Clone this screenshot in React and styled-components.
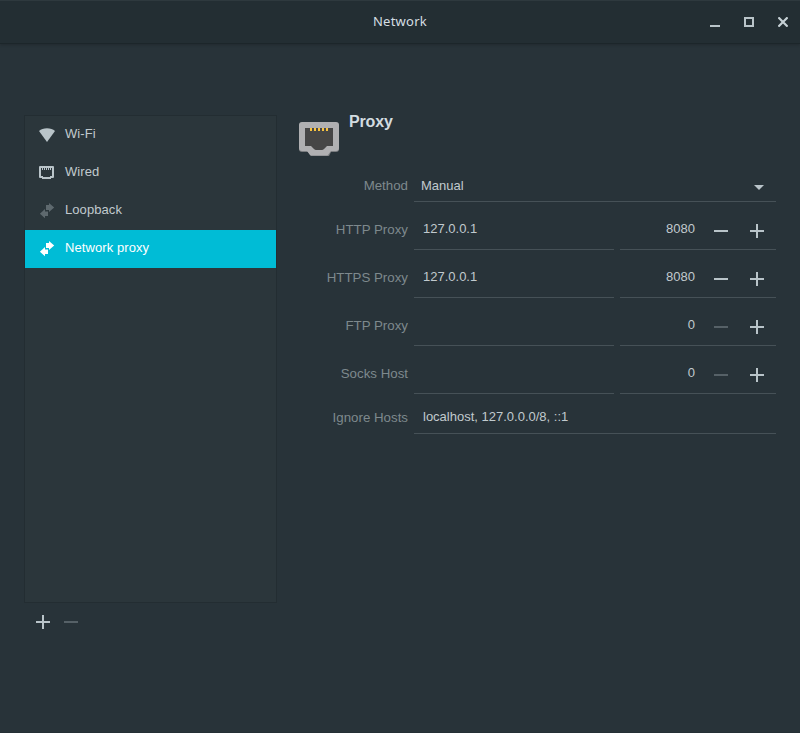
import React from 'react';
import styled, { createGlobalStyle } from 'styled-components';

const Global = createGlobalStyle`
  * { box-sizing: border-box; }
  body { margin: 0; background: #263238; }
`;

const Window = styled.main`
  width: 800px;
  height: 733px;
  display: flex;
  flex-direction: column;
  overflow: hidden;
  background: #283339;
  border-bottom: 1px solid #242f35;
  color: #c1cace;
  font: 13px/16px "Liberation Sans", Arial, sans-serif;
`;

const TitleBar = styled.header`
  flex: none;
  height: 44px;
  display: grid;
  grid-template-columns: 1fr auto 1fr;
  align-items: center;
  background: #232e33;
  border-top: 1px solid #2e393e;
  border-bottom: 1px solid #1c262a;
  box-shadow: 0 1px 3px rgba(0, 0, 0, 0.2);
`;

const Title = styled.h1`
  grid-column: 2;
  margin: 0;
  font: 400 13px/18px "Noto Sans", sans-serif;
  letter-spacing: 0.25px;
  padding-bottom: 2px;
  color: #d6dfe3;
`;

const WindowControls = styled.div`
  display: flex;
  align-items: center;
  justify-content: flex-end;
  gap: 24px;
  padding-right: 12px;
`;

const Icon = styled.svg`
  display: block;
  flex: none;
  color: ${(p) => p.$color || '#b9c4c9'};
`;

const Content = styled.div`
  flex: 1;
  display: flex;
  gap: 22px;
  padding: 71px 24px 0;
`;

const Sidebar = styled.aside`
  width: 253px;
  flex: none;
`;

const DeviceList = styled.ul`
  height: 488px;
  margin: 0;
  padding: 0;
  list-style: none;
  background: #2b363b;
  border: 1px solid #232d32;
`;

const Device = styled.li`
  height: 38px;
  display: flex;
  align-items: center;
  gap: 10px;
  padding-left: 14px;
  background: ${(p) => (p.$selected ? '#00bcd6' : 'transparent')};
  color: ${(p) => (p.$selected ? '#ffffff' : 'inherit')};
`;

const DeviceName = styled.span`
  padding-bottom: 3px;
  letter-spacing: 0.08px;
`;

const ListActions = styled.div`
  display: flex;
  gap: 14px;
  padding: 12px;
`;

const Panel = styled.section`
  width: 477px;
`;

const PanelHeader = styled.div`
  display: flex;
  gap: 10px;
  height: 55px;
`;

const JackIcon = styled(Icon)`
  margin-top: 7px;
`;

const PanelTitle = styled.h2`
  margin: 0;
  padding-top: 1px;
  height: 16px;
  font: bold 16px/12px "Liberation Sans", Arial, sans-serif;
  letter-spacing: -0.15px;
  color: #d3dce0;
`;

const Row = styled.div`
  display: grid;
  grid-template-columns: 109px ${(p) => (p.$wide ? '362px' : '200px 156px')};
  column-gap: 6px;
  height: ${(p) => p.$height}px;
`;

const Label = styled.label`
  padding-top: ${(p) => p.$top}px;
  text-align: right;
  font-size: 13.300px;
  color: #7e898d;
`;

const Field = styled.div`
  display: flex;
  padding: ${(p) => p.$top}px 12px 0 ${(p) => p.$left ?? 9}px;
  border-bottom: 1px solid #465157;
`;

const PortField = styled(Field)`
  justify-content: flex-end;
  padding-left: 0;
`;

const Steps = styled.span`
  display: flex;
  gap: 22px;
  padding: 3px 0 0 19px;
`;

const MethodValue = styled.span`
  flex: 1;
`;

const Arrow = styled(Icon)`
  margin-top: 7px;
`;

function Plus() {
  return (
    <Icon width="14" height="14" shapeRendering="crispEdges">
      <path d="M6 0h2v6h6v2H8v6H6V8H0V6h6z" fill="currentColor" />
    </Icon>
  );
}

function Minus({ disabled }) {
  return (
    <Icon width="14" height="14" $color={disabled ? '#566167' : undefined}>
      <path d="M0 6h14v2H0z" fill="currentColor" />
    </Icon>
  );
}

function WifiIcon() {
  return (
    <Icon width="16" height="16">
      <path d="M0 4C2 2 4.700 1.200 8 1.200S14 2 16 4L8 15z" fill="currentColor" />
    </Icon>
  );
}

function WiredIcon() {
  return (
    <Icon width="16" height="16">
      <path
        fillRule="evenodd"
        d="M1 1h13q1 0 1 1v10q0 1-1 1h-2v1H3v-1H1q-1 0-1-1V2q0-1 1-1zm1 2v8h2v1h7v-1h2V3h-1v2h-1V3h-1v2H9V3H8v2H7V3H6v2H5V3H4v2H3V3z"
        fill="currentColor"
      />
    </Icon>
  );
}

function TransferIcon({ color }) {
  return (
    <Icon width="16" height="16" $color={color}>
      <path d="M10 0 15.200 4.500 10 9V7H7V2h3zM6 6v2.500h3v4.500H6v2.300L.9 10.700z" fill="currentColor" />
    </Icon>
  );
}

const devices = [
  { name: 'Wi-Fi', icon: <WifiIcon /> },
  { name: 'Wired', icon: <WiredIcon /> },
  { name: 'Loopback', icon: <TransferIcon color="#5e696e" /> },
  { name: 'Network proxy', icon: <TransferIcon color="#ffffff" />, selected: true },
];

const proxies = [
  { label: 'HTTP Proxy', host: '127.0.0.1', port: 8080 },
  { label: 'HTTPS Proxy', host: '127.0.0.1', port: 8080 },
  { label: 'FTP Proxy', host: '', port: 0 },
  { label: 'Socks Host', host: '', port: 0 },
];

export default function App() {
  return (
    <Window>
      <Global />
      <TitleBar>
        <Title>Network</Title>
        <WindowControls>
          <Icon width="10" height="10"><path d="M0 8h10v2H0z" fill="currentColor" /></Icon>
          <Icon width="10" height="10"><path d="M1 1h8v8H1z" fill="none" stroke="currentColor" strokeWidth="2" /></Icon>
          <Icon width="10" height="10" $color="#c6d1d6"><path d="m.4.400 9.200 9.200m0-9.200L.4 9.600" stroke="currentColor" strokeWidth="2.200" /></Icon>
        </WindowControls>
      </TitleBar>
      <Content>
        <Sidebar>
          <DeviceList>
            {devices.map((d) => (
              <Device key={d.name} $selected={d.selected}>
                {d.icon}
                <DeviceName>{d.name}</DeviceName>
              </Device>
            ))}
          </DeviceList>
          <ListActions>
            <Plus />
            <Minus disabled />
          </ListActions>
        </Sidebar>
        <Panel>
          <PanelHeader>
            <JackIcon width="40" height="34">
              <path d="M3 1h34q3 0 3 3v23q0 3-3 3h-5l-2 4H12l-3-4H3q-3 0-3-3V4q0-3 3-3z" fill="#7b7d80" />
              <path d="M3 0h34q3 0 3 3v23q0 3-3 3h-5l-3 4q-.5.500-1.500.500h-15q-1 0-1.500-.5l-3-4H3q-3 0-3-3V3q0-3 3-3z" fill="#b0b0b2" />
              <path d="M6 6h28v18h-6l-3 3q-1 1-2 1h-6q-1 0-2-1l-3-3H6z" fill="#464646" />
              <path d="M11 6h2v3h-2zm4 0h2v3h-2zm4 0h2v3h-2zm4 0h2v3h-2zm4 0h2v3h-2z" fill="#f9c440" />
            </JackIcon>
            <PanelTitle>Proxy</PanelTitle>
          </PanelHeader>
          <Row $wide $height={32}>
            <Label $top={8}>Method</Label>
            <Field $top={8} $left={7}>
              <MethodValue>Manual</MethodValue>
              <Arrow width="10" height="5"><path d="M0 0h10L5 5z" fill="currentColor" /></Arrow>
            </Field>
          </Row>
          {proxies.map((p) => (
            <Row key={p.label} $height={48}>
              <Label $top={20}>{p.label}</Label>
              <Field $top={19}>{p.host}</Field>
              <PortField $top={19}>
                {p.port}
                <Steps>
                  <Minus disabled={p.port === 0} />
                  <Plus />
                </Steps>
              </PortField>
            </Row>
          ))}
          <Row $wide $height={40}>
            <Label $top={16}>Ignore Hosts</Label>
            <Field $top={15}>localhost, 127.0.0.0/8, ::1</Field>
          </Row>
        </Panel>
      </Content>
    </Window>
  );
}
